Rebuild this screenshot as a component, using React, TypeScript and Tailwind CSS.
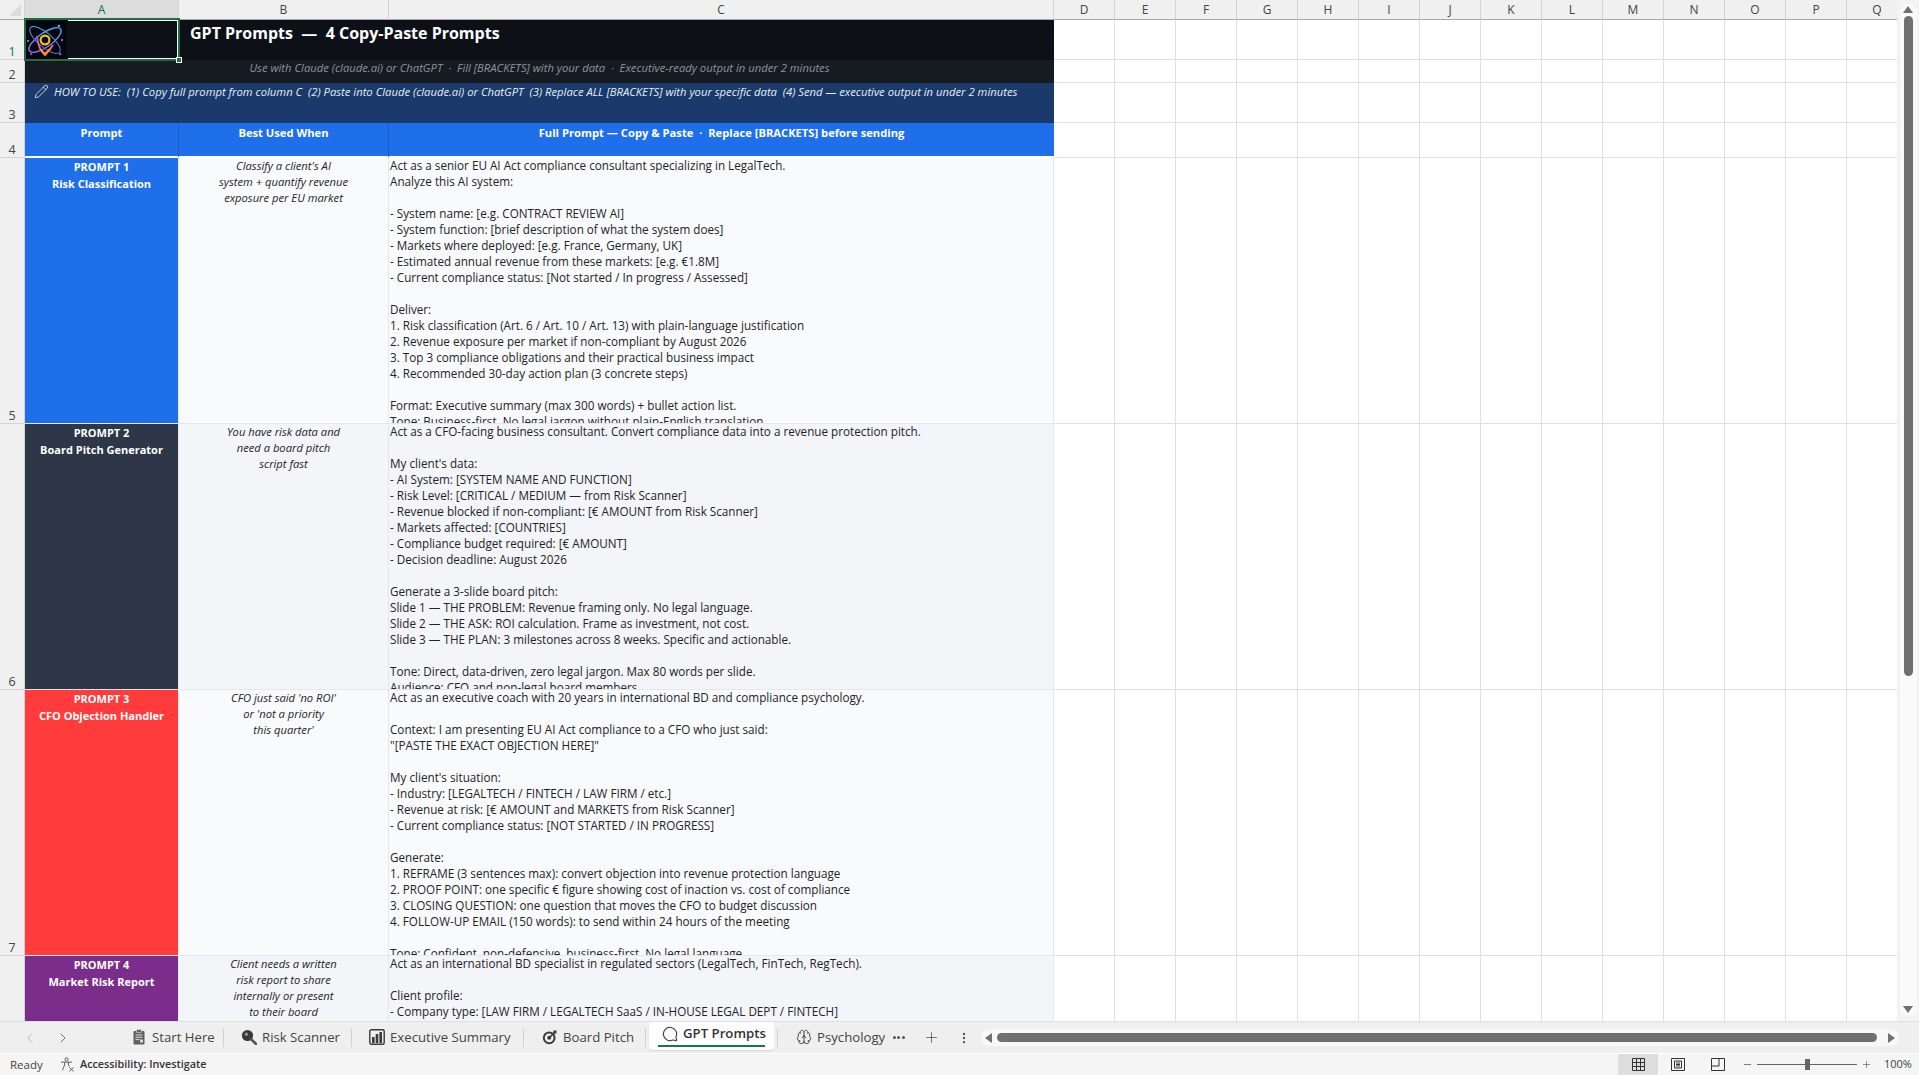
import { Brain, Minus, MoreVertical, Pencil, Plus, ChevronLeft, ChevronRight, MessageCircle } from "lucide-react";

const columns = ["D", "E", "F", "G", "H", "I", "J", "K", "L", "M", "N", "O", "P", "Q"];

const prompts = [
  {
    row: 5,
    color: "bg-[#1f6feb]",
    fill: "bg-[#f8fafc]",
    title: "PROMPT 1",
    name: "Risk Classification",
    when: "Classify a client's AI\nsystem + quantify revenue\nexposure per EU market",
    body: `Act as a senior EU AI Act compliance consultant specializing in LegalTech.
Analyze this AI system:

- System name: [e.g. CONTRACT REVIEW AI]
- System function: [brief description of what the system does]
- Markets where deployed: [e.g. France, Germany, UK]
- Estimated annual revenue from these markets: [e.g. €1.8M]
- Current compliance status: [Not started / In progress / Assessed]

Deliver:
1. Risk classification (Art. 6 / Art. 10 / Art. 13) with plain-language justification
2. Revenue exposure per market if non-compliant by August 2026
3. Top 3 compliance obligations and their practical business impact
4. Recommended 30-day action plan (3 concrete steps)

Format: Executive summary (max 300 words) + bullet action list.
Tone: Business-first. No legal jargon without plain-English translation`,
  },
  {
    row: 6,
    color: "bg-[#2d3748]",
    fill: "bg-[#f3f5f9]",
    title: "PROMPT 2",
    name: "Board Pitch Generator",
    when: "You have risk data and\nneed a board pitch\nscript fast",
    body: `Act as a CFO-facing business consultant. Convert compliance data into a revenue protection pitch.

My client's data:
- AI System: [SYSTEM NAME AND FUNCTION]
- Risk Level: [CRITICAL / MEDIUM — from Risk Scanner]
- Revenue blocked if non-compliant: [€ AMOUNT from Risk Scanner]
- Markets affected: [COUNTRIES]
- Compliance budget required: [€ AMOUNT]
- Decision deadline: August 2026

Generate a 3-slide board pitch:
Slide 1 — THE PROBLEM: Revenue framing only. No legal language.
Slide 2 — THE ASK: ROI calculation. Frame as investment, not cost.
Slide 3 — THE PLAN: 3 milestones across 8 weeks. Specific and actionable.

Tone: Direct, data-driven, zero legal jargon. Max 80 words per slide.
Audience: CFO and non-legal board members`,
  },
  {
    row: 7,
    color: "bg-[#ff3b3b]",
    fill: "bg-[#f8fafc]",
    title: "PROMPT 3",
    name: "CFO Objection Handler",
    when: "CFO just said 'no ROI'\nor 'not a priority\nthis quarter'",
    body: `Act as an executive coach with 20 years in international BD and compliance psychology.

Context: I am presenting EU AI Act compliance to a CFO who just said:
"[PASTE THE EXACT OBJECTION HERE]"

My client's situation:
- Industry: [LEGALTECH / FINTECH / LAW FIRM / etc.]
- Revenue at risk: [€ AMOUNT and MARKETS from Risk Scanner]
- Current compliance status: [NOT STARTED / IN PROGRESS]

Generate:
1. REFRAME (3 sentences max): convert objection into revenue protection language
2. PROOF POINT: one specific € figure showing cost of inaction vs. cost of compliance
3. CLOSING QUESTION: one question that moves the CFO to budget discussion
4. FOLLOW-UP EMAIL (150 words): to send within 24 hours of the meeting

Tone: Confident, non-defensive, business-first. No legal language`,
  },
  {
    row: 8,
    color: "bg-[#7b2d8b]",
    fill: "bg-[#f3f5f9]",
    title: "PROMPT 4",
    name: "Market Risk Report",
    when: "Client needs a written\nrisk report to share\ninternally or present\nto their board",
    body: `Act as an international BD specialist in regulated sectors (LegalTech, FinTech, RegTech).

Client profile:
- Company type: [LAW FIRM / LEGALTECH SaaS / IN-HOUSE LEGAL DEPT / FINTECH]`,
  },
];

function RowNumber({ n, active }: { n: number; active?: boolean }) {
  return (
    <div
      className={`flex items-end justify-center border-r border-b border-[#d4d4d4] bg-[#f0f0f0] text-[12.5px] leading-[15px] ${
        active ? "text-[#217346]" : "text-[#444444]"
      }`}
    >
      {n}
    </div>
  );
}

function ColHead({ label, active }: { label: string; active?: boolean }) {
  return (
    <div
      className={`flex items-center justify-center border-r border-b border-r-[#d4d4d4] border-b-[#a8a8a8] text-[12px] ${
        active ? "bg-[#dcdcdc] text-[#217346]" : "bg-[#f0f0f0] text-[#444444]"
      }`}
    >
      {label}
    </div>
  );
}

function Blank() {
  return <div className="border-r border-b border-[#e0e0e0] bg-white" />;
}

function Logo() {
  return (
    <svg viewBox="0 0 42 38" className="h-[38px] w-[42px] shrink-0 bg-[#05060c]">
      <defs>
        <linearGradient id="orbit" x1="0" y1="1" x2="1" y2="0">
          <stop offset="0" stopColor="#a855f7" />
          <stop offset="1" stopColor="#38bdf8" />
        </linearGradient>
        <linearGradient id="orbit2" x1="0" y1="0" x2="1" y2="1">
          <stop offset="0" stopColor="#38bdf8" />
          <stop offset="1" stopColor="#6d5bd0" />
        </linearGradient>
        <linearGradient id="orbit3" x1="0" y1="0" x2="0" y2="1">
          <stop offset="0" stopColor="#a855f7" />
          <stop offset="1" stopColor="#fb923c" />
        </linearGradient>
      </defs>
      <ellipse cx="20" cy="19" rx="19" ry="7" fill="none" stroke="url(#orbit)" strokeWidth="1.4" transform="rotate(-35 20 19)" />
      <ellipse cx="20" cy="19" rx="19" ry="7" fill="none" stroke="url(#orbit2)" strokeWidth="1" transform="rotate(40 20 19)" />
      <path d="M12 15 Q13 28 20 34 Q24 30 28 24" fill="none" stroke="url(#orbit3)" strokeWidth="1.8" />
      <path d="M15 28 L20 33 L25 28" fill="none" stroke="#fb923c" strokeWidth="1.8" />
      <circle cx="20" cy="19" r="4.4" fill="none" stroke="#fbbf24" strokeWidth="2.2" />
      <circle cx="3" cy="20" r="1" fill="#c084fc" />
      <circle cx="37" cy="19" r="1" fill="#a78bfa" />
      <circle cx="6" cy="33" r="1.3" fill="#7c3aed" />
      <circle cx="35" cy="33" r="1.3" fill="#6d5bd0" />
      <circle cx="34" cy="5" r="1.2" fill="#38bdf8" />
    </svg>
  );
}

function ClipboardIcon() {
  return (
    <svg viewBox="0 0 16 16" className="h-4 w-4 shrink-0">
      <rect x="2.5" y="2" width="11" height="13.5" rx="1" fill="#5f5f5f" />
      <rect x="5.5" y="0.6" width="5" height="3" rx="0.6" fill="#5f5f5f" stroke="#efefef" strokeWidth="0.6" />
      <path d="M4.5 6h7M4.5 8.3h7M4.5 10.6h4" stroke="#efefef" strokeWidth="0.9" />
      <rect x="9" y="10.5" width="3" height="3" fill="#d9d9d9" />
    </svg>
  );
}

function SearchIcon() {
  return (
    <svg viewBox="0 0 16 16" className="h-4 w-4 shrink-0">
      <circle cx="6.5" cy="6.5" r="5.6" fill="#3a3a3a" />
      <circle cx="5.4" cy="5.2" r="1.6" fill="#9a9a9a" />
      <path d="M10.5 10.5L15 15" stroke="#555555" strokeWidth="2.6" strokeLinecap="round" />
    </svg>
  );
}

function ChartIcon() {
  return (
    <svg viewBox="0 0 16 16" className="h-4 w-4 shrink-0">
      <rect x="0.8" y="0.8" width="14.4" height="14.4" rx="1.5" fill="none" stroke="#3a3a3a" strokeWidth="1.4" />
      <rect x="3" y="8" width="2.6" height="6" fill="#3a3a3a" />
      <rect x="6.7" y="5" width="2.6" height="9" fill="#3a3a3a" />
      <rect x="10.4" y="3" width="2.6" height="11" fill="#3a3a3a" />
    </svg>
  );
}

function TargetIcon() {
  return (
    <svg viewBox="0 0 16 16" className="h-4 w-4 shrink-0">
      <circle cx="7.2" cy="8.8" r="5.4" fill="none" stroke="#3a3a3a" strokeWidth="2" />
      <circle cx="7.2" cy="8.8" r="2" fill="#3a3a3a" />
      <path d="M7.5 8.5L13.5 2.5" stroke="#3a3a3a" strokeWidth="1.6" />
      <path d="M11.5 1.5l3 0 0 3-2 0-1-1z" fill="#3a3a3a" />
    </svg>
  );
}

function SheetTab({ icon, label, width, pad }: { icon: React.ReactNode; label: string; width: string; pad: string }) {
  return (
    <div className={`flex shrink-0 items-center gap-[5px] overflow-hidden text-[13.2px] whitespace-nowrap text-[#444444] ${width} ${pad}`}>
      {icon}
      <span>{label}</span>
    </div>
  );
}

function Divider() {
  return <div className="h-[18px] w-px shrink-0 bg-[#d0d0d0]" />;
}

export default function App() {
  return (
    <div className="flex h-[1075px] w-[1919px] flex-col overflow-hidden bg-[#f0f0f0] font-['Open_Sans','Noto_Sans',sans-serif]">
      <div className="flex h-[1021px] shrink-0">
        <div className="relative h-full w-[1897px] overflow-hidden">
          <div className="grid w-max grid-cols-[25px_154px_210px_665px_repeat(14,61px)] grid-rows-[20px_40px_23px_40px_35px_266px_266px_266px_266px]">
            {/* column letters */}
            <div className="flex items-end justify-end border-r border-b border-r-[#d4d4d4] border-b-[#a8a8a8] bg-[#f0f0f0] pr-[3px] pb-[3px]">
              <svg viewBox="0 0 12 12" className="h-3 w-3">
                <polygon points="12,0 12,12 0,12" fill="#dcdcdc" />
              </svg>
            </div>
            <ColHead label="A" active />
            <ColHead label="B" />
            <ColHead label="C" />
            {columns.map((c) => (
              <ColHead key={c} label={c} />
            ))}

            {/* row 1 */}
            <RowNumber n={1} active />
            <div className="flex items-start bg-[#0d1117] pt-[1px]">
              <Logo />
            </div>
            <div className="col-span-2 bg-[#0d1117] pt-[2px] pl-[11px] text-[16px] leading-[22px] font-bold text-white">
              GPT Prompts &nbsp;—&nbsp; 4 Copy-Paste Prompts
            </div>
            {columns.map((c) => (
              <Blank key={c} />
            ))}

            {/* row 2 */}
            <RowNumber n={2} />
            <div className="col-span-3 bg-[#161b22] text-center text-[11.25px] leading-[16px] text-[#8b949e] italic">
              Use with Claude (claude.ai) or ChatGPT &nbsp;·&nbsp; Fill [BRACKETS] with your data &nbsp;·&nbsp; Executive-ready output in under 2 minutes
            </div>
            {columns.map((c) => (
              <Blank key={c} />
            ))}

            {/* row 3 */}
            <RowNumber n={3} />
            <div className="col-span-3 flex items-start gap-[5px] bg-[#1a3a6b] pt-[1px] pl-[9px] text-[11.25px] leading-[16px] text-[#e6edf3] italic">
              <Pencil size={15} strokeWidth={1.2} className="shrink-0 text-white" />
              <span>HOW TO USE: &nbsp;(1) Copy full prompt from column C &nbsp;(2) Paste into Claude (claude.ai) or ChatGPT &nbsp;(3) Replace ALL [BRACKETS] with your specific data &nbsp;(4) Send — executive output in under 2 minutes</span>
            </div>
            {columns.map((c) => (
              <Blank key={c} />
            ))}

            {/* row 4 */}
            <RowNumber n={4} />
            <div className="border-r border-b-2 border-r-[#1a5bc4] border-b-white bg-[#1f6feb] pt-[2px] text-center text-[11.2px] leading-[16px] font-bold text-white">Prompt</div>
            <div className="border-r border-b-2 border-r-[#1a5bc4] border-b-white bg-[#1f6feb] pt-[2px] text-center text-[11.2px] leading-[16px] font-bold text-white">Best Used When</div>
            <div className="border-b-2 border-b-white bg-[#1f6feb] pt-[2px] text-center text-[11.2px] leading-[16px] font-bold text-white">Full Prompt — Copy &amp; Paste &nbsp;·&nbsp; Replace [BRACKETS] before sending</div>
            {columns.map((c) => (
              <Blank key={c} />
            ))}

            {/* prompt rows */}
            {prompts.map((p) => [
              <RowNumber key={`n${p.row}`} n={p.row} />,
              <div key={`a${p.row}`} className={`border-r border-b border-r-[#e2e8f0] border-b-[#e2e8f0] text-center text-[11px] leading-[17px] font-bold text-white ${p.color}`}>
                <div>{p.title}</div>
                <div>{p.name}</div>
              </div>,
              <div key={`b${p.row}`} className={`border-r border-b border-[#e2e8f0] text-center text-[11.2px] leading-[16px] whitespace-pre-line text-[#1f2328] italic ${p.fill}`}>
                {p.when}
              </div>,
              <div key={`c${p.row}`} className={`overflow-hidden border-r border-b border-[#e2e8f0] pl-[1px] text-[11.7px] leading-[16px] whitespace-pre-line text-[#1f2328] ${p.fill}`}>
                <div className="-mt-[1px]">{p.body}</div>
              </div>,
              ...columns.map((c) => <Blank key={`${c}${p.row}`} />),
            ])}
          </div>

          {/* selected cell A1 */}
          <div className="absolute top-[18px] left-[24px] h-[43px] w-[156px] border-2 border-[#1e6e42]">
            <div className="absolute right-0 bottom-0 left-[42px] h-px bg-white" />
            <div className="absolute top-0 right-0 left-[42px] h-px bg-white" />
            <div className="absolute top-0 right-0 bottom-0 w-px bg-white" />
            <div className="absolute right-[-4px] bottom-[-4px] h-[6px] w-[6px] border border-white bg-[#1e6e42]" />
          </div>
        </div>

        {/* vertical scrollbar */}
        <div className="flex w-[22px] flex-col items-center bg-[#f3f3f3] pt-[4px]">
          <div className="flex h-[1012px] w-[17px] flex-col items-center rounded-full bg-[#fafafa] pt-[2px]">
            <svg viewBox="0 0 10 7" className="h-[7px] w-[10px] shrink-0">
              <polygon points="5,0 10,7 0,7" fill="#707070" />
            </svg>
            <div className="mt-[3px] h-[660px] w-[9px] shrink-0 rounded-full bg-[#707070]" />
            <div className="flex-1" />
            <svg viewBox="0 0 10 7" className="mb-[3px] h-[7px] w-[10px] shrink-0">
              <polygon points="0,0 10,0 5,7" fill="#707070" />
            </svg>
          </div>
        </div>
      </div>

      {/* sheet tabs */}
      <div className="flex h-[32px] shrink-0 items-center border-t border-[#e0e0e0] bg-[#efefef]">
        <div className="flex w-[125px] shrink-0 items-center gap-[17px] pl-[22px]">
          <ChevronLeft size={16} strokeWidth={1.2} className="text-[#b0b0b0]" />
          <ChevronRight size={16} strokeWidth={1.2} className="text-[#555555]" />
        </div>
        <SheetTab icon={<ClipboardIcon />} label="Start Here" width="w-[98px]" pad="pl-[6px]" />
        <Divider />
        <SheetTab icon={<SearchIcon />} label="Risk Scanner" width="w-[127px]" pad="pl-[17px]" />
        <Divider />
        <SheetTab icon={<ChartIcon />} label="Executive Summary" width="w-[171px]" pad="pl-[17px]" />
        <Divider />
        <SheetTab icon={<TargetIcon />} label="Board Pitch" width="w-[121px]" pad="pl-[18px]" />
        <Divider />
        <div className="relative ml-[3px] flex h-[28px] w-[125px] shrink-0 -translate-y-[2px] items-center gap-[5px] rounded-b-[4px] bg-white pb-[4px] pl-[13px] text-[13.2px] font-semibold text-[#333333] shadow-[0_1px_1px_rgba(0,0,0,0.1)]">
          <MessageCircle size={16} strokeWidth={1.6} className="-scale-x-100" />
          <span>GPT Prompts</span>
          <div className="absolute bottom-[3px] left-[9px] h-[2px] w-[107px] bg-[#107c41]" />
        </div>
        <div className="ml-[3px]"><Divider /></div>
        <SheetTab icon={<Brain size={16} strokeWidth={1.4} className="shrink-0" />} label="Psychology Triggers" width="w-[107px]" pad="pl-[18px]" />
        <div className="flex w-[27px] shrink-0 justify-center gap-[1.5px]">
          <span className="h-[3px] w-[3px] rounded-full bg-[#555555]" />
          <span className="h-[3px] w-[3px] rounded-full bg-[#555555]" />
          <span className="h-[3px] w-[3px] rounded-full bg-[#555555]" />
        </div>
        <div className="flex w-[38px] shrink-0 justify-center">
          <Plus size={17} strokeWidth={1} className="text-[#444444]" />
        </div>
        <div className="flex w-[28px] shrink-0 justify-center">
          <MoreVertical size={14} strokeWidth={2} className="text-[#555555]" />
        </div>
        <div className="ml-[3px] flex h-[17px] w-[918px] shrink-0 items-center rounded-full bg-[#f8f8f8] pr-[4px] pl-[4px]">
          <svg viewBox="0 0 7 10" className="h-[10px] w-[7px] shrink-0">
            <polygon points="7,0 7,10 0,5" fill="#707070" />
          </svg>
          <div className="ml-[5px] h-[9px] w-[880px] shrink-0 rounded-full bg-[#707070]" />
          <div className="flex-1" />
          <svg viewBox="0 0 7 10" className="h-[10px] w-[7px] shrink-0">
            <polygon points="0,0 7,5 0,10" fill="#707070" />
          </svg>
        </div>
      </div>

      {/* status bar */}
      <div className="flex h-[22px] shrink-0 items-center border-t border-white bg-[#f5f5f5] text-[11.5px] text-[#444444]">
        <span className="ml-[10px] w-[50px] shrink-0">Ready</span>
        <svg viewBox="0 0 16 16" className="h-[15px] w-[15px] shrink-0">
          <circle cx="7" cy="2.5" r="1.7" fill="none" stroke="#444444" strokeWidth="0.9" />
          <path d="M1 5.5h12M5 5.5v3L2.5 14M9 5.5v3l1 1.5" fill="none" stroke="#444444" strokeWidth="0.9" />
          <path d="M10 11l4.5 4.5M14.5 11L10 15.5" stroke="#444444" strokeWidth="0.9" />
        </svg>
        <span className="ml-[5px] text-[10.8px] font-semibold text-[#333333]">Accessibility: Investigate</span>
        <div className="flex-1" />
        <div className="flex h-full w-[40px] items-center justify-center bg-[#dedede]">
          <svg viewBox="0 0 13 13" className="h-[13px] w-[13px]">
            <path d="M.5.5h12v12H.5zM.5 4.5h12M.5 8.5h12M4.5.5v12M8.5.5v12" fill="none" stroke="#333333" />
          </svg>
        </div>
        <div className="flex h-full w-[40px] items-center justify-center">
          <svg viewBox="0 0 14 13" className="h-[13px] w-[14px]">
            <path d="M.5.5h13v12H.5zM3.5 3h7v7h-7zM5 5h4M5 6.5h4M5 8h4" fill="none" stroke="#333333" />
          </svg>
        </div>
        <div className="flex h-full w-[40px] items-center justify-center">
          <svg viewBox="0 0 14 13" className="h-[13px] w-[14px]">
            <path d="M.5.5h13v12H.5zM.5 8h7.5V.5" fill="none" stroke="#333333" />
          </svg>
        </div>
        <Minus size={11} strokeWidth={1.5} className="ml-[4px] shrink-0 text-[#444444]" />
        <div className="relative ml-[4px] h-px w-[100px] shrink-0 bg-[#666666]">
          <div className="absolute top-[-5px] left-[48px] h-[11px] w-[5px] bg-[#666666]" />
        </div>
        <Plus size={11} strokeWidth={1.2} className="ml-[4px] shrink-0 text-[#444444]" />
        <span className="mr-[8px] ml-[12px] w-[27px] shrink-0 text-[11px]">100%</span>
      </div>
    </div>
  );
}
